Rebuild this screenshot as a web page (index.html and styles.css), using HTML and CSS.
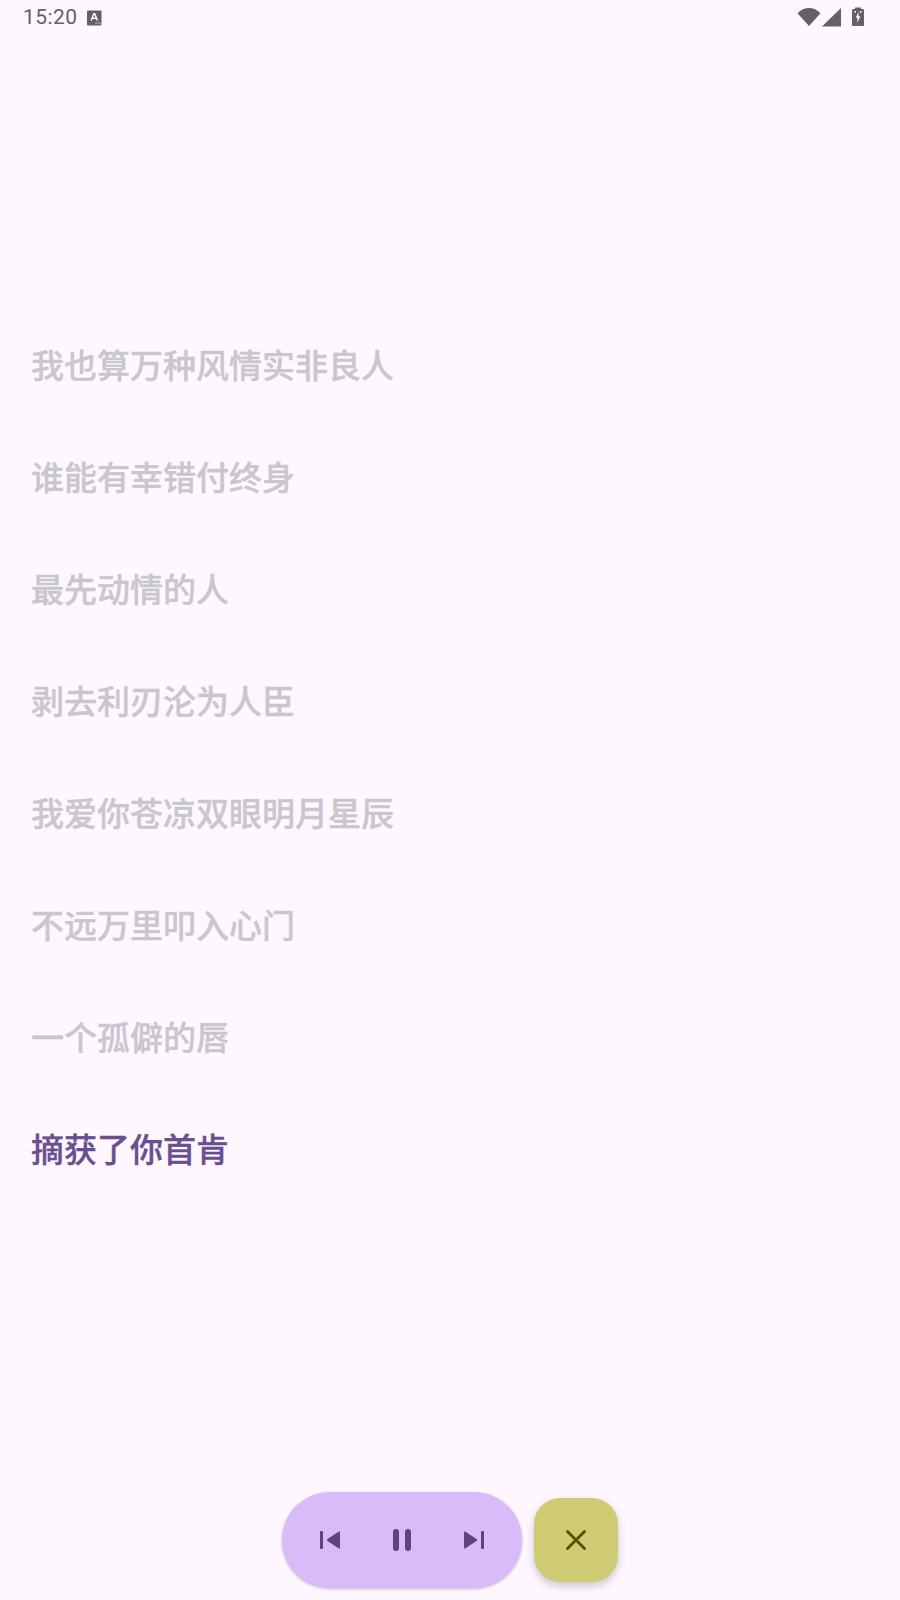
FILE: index.html
```html
<!DOCTYPE html>
<html>
<head>
    <title>Lyrics</title>
    <link rel="stylesheet" href="styles.css">
</head>
<body>
    <div class="page">
        <div class="status-bar">
            <div class="status-left">
                <span class="clock">15:20</span>
                <svg class="ime-icon" width="15" height="16" viewBox="0 0 15 16">
                    <rect x="0" y="0.5" width="14.5" height="15" rx="1" fill="#646166"/>
                    <path d="M3.4 10.5 L6.4 3 H8.2 L11.2 10.5 H9.6 L9 8.9 H5.6 L5 10.5 Z M6.1 7.6 H8.5 L7.3 4.6 Z" fill="#fff"/>
                    <path d="M8.5 12.6h1v1h-1z M10.5 12.6h1v1h-1z M12.5 12.6h1v1h-1z" fill="#fff"/>
                </svg>
            </div>
            <div class="status-right">
                <svg width="24" height="20" viewBox="0 0 24 20"><path d="M12 19 L0.5 6.2 Q5.5 1 12 1 Q18.5 1 23.5 6.2 Z" fill="#646166"/></svg>
                <svg class="signal" width="20" height="20" viewBox="0 0 20 20"><path d="M0 19.5 L19 1 V19.5 Z" fill="#646166"/></svg>
                <svg class="battery" width="14" height="20" viewBox="0 0 14 20">
                    <path d="M1 3.5 Q1 2 2 2 H4 V0.5 H10 V2 H12 Q13 2 13 3.5 V18 Q13 19 12 19 H2 Q1 19 1 18 Z" fill="#646166"/>
                    <path d="M7.8 4.5 L4.8 10.7 H6.6 L6.2 16 L9.3 9.3 H7.4 Z" fill="#fff"/>
                    <rect x="3.4" y="4" width="1.6" height="1.6" fill="#fff"/>
                    <rect x="9" y="4" width="1.6" height="1.6" fill="#fff"/>
                </svg>
            </div>
        </div>

        <div class="lyrics">
            <div class="line">我也算万种风情实非良人</div>
            <div class="line">谁能有幸错付终身</div>
            <div class="line">最先动情的人</div>
            <div class="line">剥去利刃沦为人臣</div>
            <div class="line">我爱你苍凉双眼明月星辰</div>
            <div class="line">不远万里叩入心门</div>
            <div class="line">一个孤僻的唇</div>
            <div class="line current">摘获了你首肯</div>
        </div>

        <div class="controls">
            <div class="player">
                <button class="ctrl">
                    <svg width="24" height="24" viewBox="0 0 24 24"><rect x="2" y="3" width="3" height="18" rx="1" fill="#5f4380"/><path d="M22 4.5 V19.5 Q22 21 20.5 20.2 L9.5 13 Q8 12 9.5 11 L20.5 3.8 Q22 3 22 4.5 Z" fill="#5f4380"/></svg>
                </button>
                <button class="ctrl">
                    <svg width="24" height="24" viewBox="0 0 24 24"><rect x="3" y="1" width="6" height="22" rx="3" fill="#5f4380"/><rect x="15" y="1" width="6" height="22" rx="3" fill="#5f4380"/></svg>
                </button>
                <button class="ctrl">
                    <svg width="24" height="24" viewBox="0 0 24 24"><rect x="19" y="3" width="3" height="18" rx="1" fill="#5f4380"/><path d="M2 4.5 V19.5 Q2 21 3.5 20.2 L14.5 13 Q16 12 14.5 11 L3.5 3.8 Q2 3 2 4.5 Z" fill="#5f4380"/></svg>
                </button>
            </div>
            <button class="close-btn">
                <svg width="24" height="24" viewBox="0 0 24 24"><path d="M3.5 3.5 L20.5 20.5 M20.5 3.5 L3.5 20.5" stroke="#5a5200" stroke-width="3" stroke-linecap="round"/></svg>
            </button>
        </div>
    </div>
</body>
</html>
```

FILE: styles.css
```css
html, body { margin: 0; padding: 0; }
body { background: #fef7ff; font-family: Roboto, "Noto Sans CJK SC", sans-serif; }
.page { width: 900px; height: 1600px; display: flex; flex-direction: column; overflow: hidden; }

.status-bar { height: 34px; display: flex; justify-content: space-between; align-items: center; padding: 0 35px 0 23px; color: #646166; }
.status-left { display: flex; align-items: center; gap: 9px; }
.clock { font-size: 21px; line-height: 34px; letter-spacing: 0.45px; }
.ime-icon { margin-top: 1px; }
.status-right { display: flex; align-items: center; gap: 1px; margin-top: -1px; }
.battery { margin-left: 8px; }

.lyrics { flex: 1; padding-top: 277px; padding-left: 31px; }
.line { height: 112px; line-height: 112px; font-size: 33px; font-weight: 500; color: #cac6cd; white-space: nowrap; -webkit-text-stroke: 0.35px currentColor; }
.current { color: #6a4f8f; }

.controls { display: flex; align-items: center; gap: 12px; padding: 0 0 12px 282px; }
.player { width: 240px; height: 96px; border-radius: 48px; background: #d9bbfa; display: flex; align-items: center; justify-content: space-between; padding: 0 36px; box-sizing: border-box; box-shadow: 0 1px 3px rgba(0, 0, 0, 0.25); }
.ctrl { width: 24px; height: 24px; padding: 0; border: none; background: none; display: flex; }
.close-btn { width: 84px; height: 84px; padding: 0; border: none; border-radius: 26px; background: #cfcb75; display: flex; align-items: center; justify-content: center; box-shadow: 0 4px 8px rgba(0, 0, 0, 0.2); }
```
